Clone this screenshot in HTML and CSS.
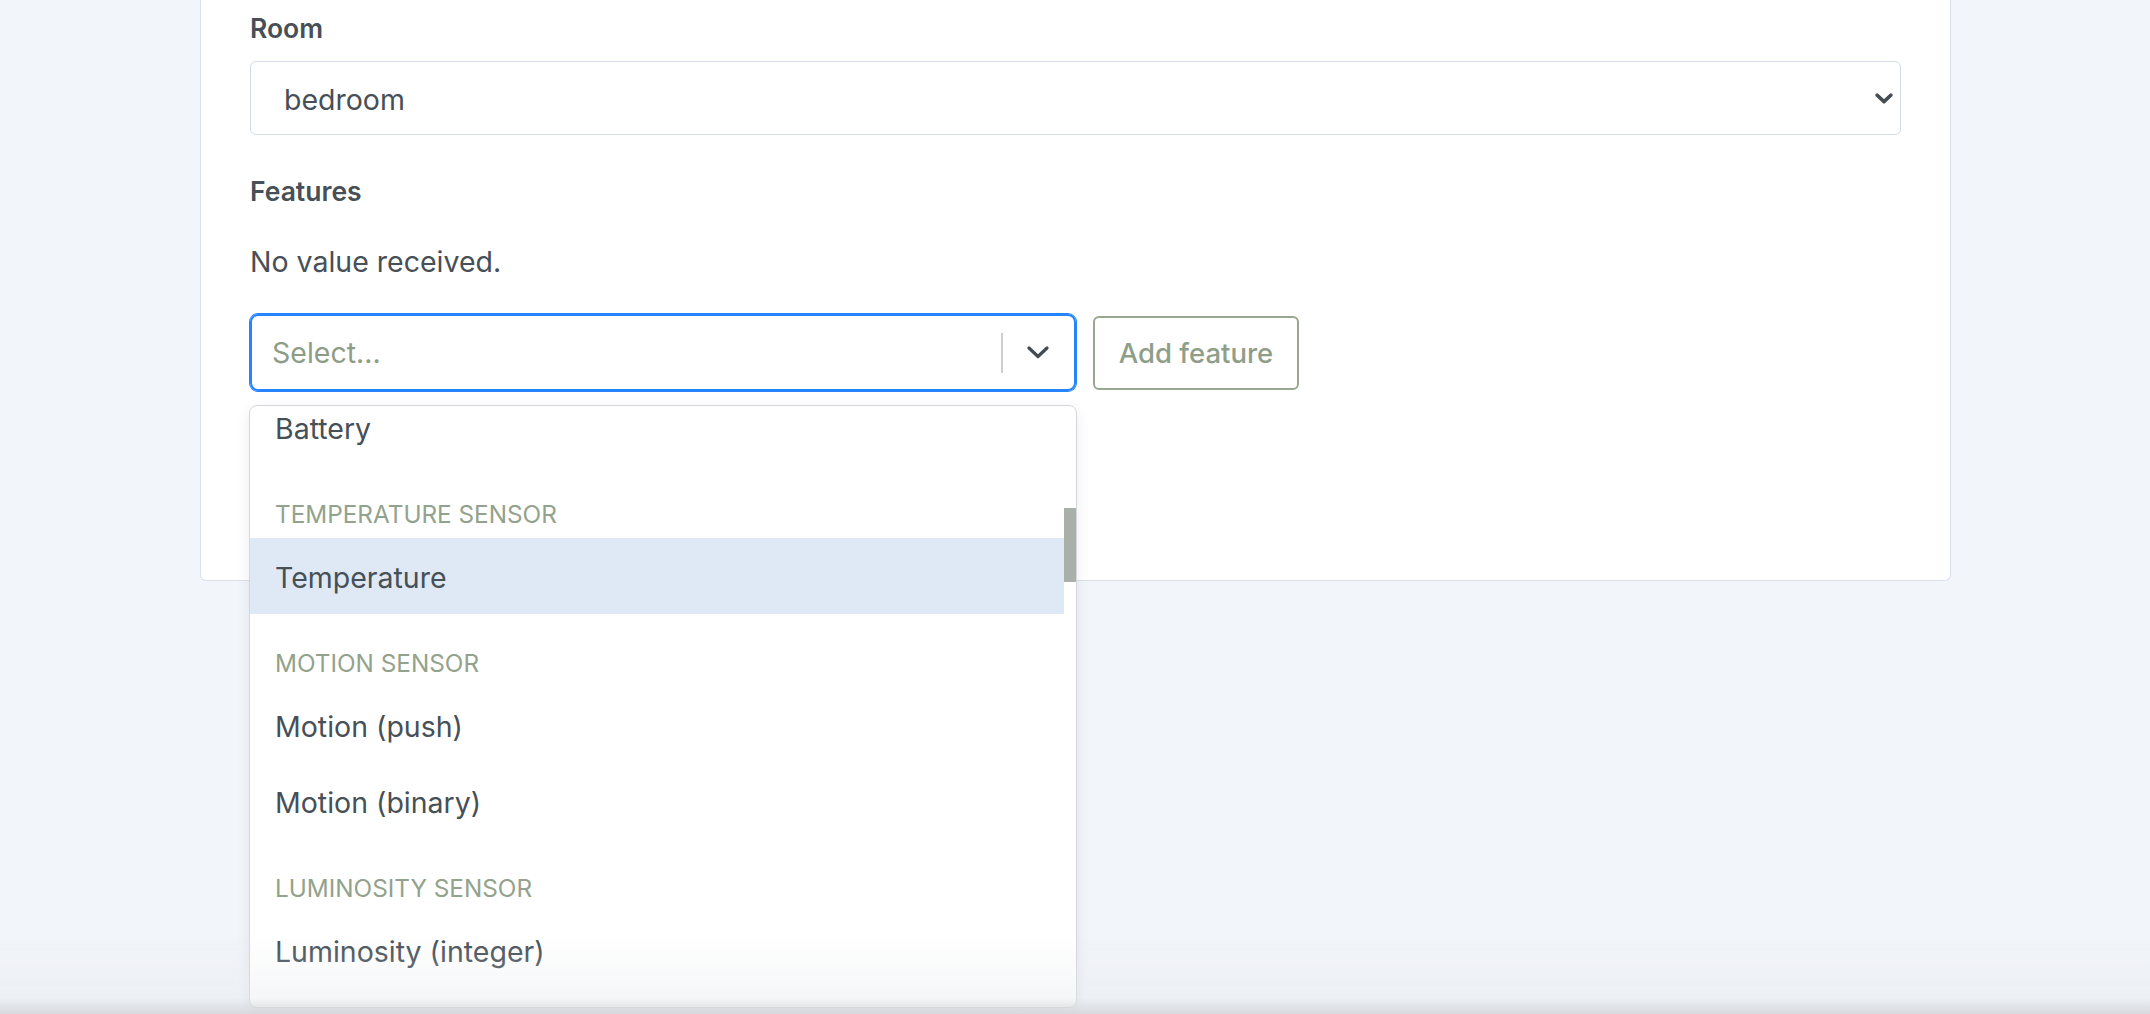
FILE: index.html
```html
<!DOCTYPE html>
<html lang="en">
<head>
    <meta charset="UTF-8">
    <meta name="viewport" content="width=device-width, initial-scale=1.0">
    <title>Edit device</title>
    <link rel="stylesheet" href="styles.css">
</head>
<body>
    <div class="page">
        <div class="card">
            <div class="field">
                <label class="field-label">Room</label>
                <div class="room-select">
                    <span>bedroom</span>
                    <svg class="select-arrow" width="18" height="11" viewBox="0 0 18 11">
                        <path d="M2.2 2.2L9 8.6L15.8 2.2" fill="none" stroke="#454c52" stroke-width="3.6" stroke-linecap="round" stroke-linejoin="round"/>
                    </svg>
                </div>
            </div>

            <div class="field">
                <label class="field-label">Features</label>
                <p class="empty-text">No value received.</p>

                <div class="feature-row">
                    <div class="feature-select">
                        <div class="control">
                            <span class="placeholder">Select...</span>
                            <span class="separator"></span>
                            <svg class="chevron" width="22" height="13" viewBox="0 0 22 13">
                                <path d="M2 2L11 10.5L20 2" fill="none" stroke="#444c52" stroke-width="3.2" stroke-linecap="round" stroke-linejoin="round"/>
                            </svg>
                        </div>

                        <div class="menu">
                            <div class="menu-list">
                                <div class="menu-scroll">
                                    <div class="option-group is-cut">
                                        <div class="option">Battery</div>
                                    </div>
                                    <div class="option-group">
                                        <div class="group-heading">Temperature sensor</div>
                                        <div class="option is-focused">Temperature</div>
                                    </div>
                                    <div class="option-group">
                                        <div class="group-heading">Motion sensor</div>
                                        <div class="option">Motion (push)</div>
                                        <div class="option">Motion (binary)</div>
                                    </div>
                                    <div class="option-group">
                                        <div class="group-heading">Luminosity sensor</div>
                                        <div class="option">Luminosity (integer)</div>
                                    </div>
                                </div>
                            </div>
                            <div class="scroll-track">
                                <div class="scroll-thumb"></div>
                            </div>
                        </div>
                    </div>
                    <button class="add-button">Add feature</button>
                </div>
            </div>
        </div>
    </div>

    <div class="bottom-fade"></div>
</body>
</html>
```

FILE: styles.css
```css
body {
    margin: 0;
    padding: 0;
    font-family: Inter, "Noto Sans", sans-serif;
    background: #f2f5fa;
    color: #474f57;
}

.page {
    padding-left: 200px;
    min-height: 1014px;
}

.card {
    width: 1751px;
    box-sizing: border-box;
    background: #fff;
    border: 1px solid #d9e1ec;
    border-top: none;
    border-radius: 0 0 6px 6px;
    padding: 13px 49px 189px;
}

.field + .field {
    margin-top: 41px;
}

.field-label {
    display: block;
    font-size: 26.5px;
    line-height: 31px;
    font-weight: 600;
    margin-bottom: 17px;
}

.room-select {
    height: 74px;
    box-sizing: border-box;
    display: flex;
    align-items: center;
    justify-content: space-between;
    padding: 3px 7px 0 33px;
    border: 1px solid #d4dce7;
    border-radius: 6px;
    font-size: 28.5px;
    line-height: 34px;
}

.select-arrow {
    margin-top: -3px;
}

.empty-text {
    margin: 38px 0 35px;
    font-size: 28.5px;
    line-height: 34px;
}

.feature-row {
    display: flex;
    align-items: center;
    gap: 17px;
}

.feature-select {
    position: relative;
    width: 826px;
}

.control {
    height: 77px;
    box-sizing: border-box;
    display: flex;
    align-items: center;
    border: 2px solid #2684ff;
    box-shadow: 0 0 0 1px #2684ff;
    border-radius: 8px;
    padding-left: 20px;
}

.placeholder {
    flex: 1;
    font-size: 28.5px;
    line-height: 34px;
    color: #8d9c87;
}

.separator {
    width: 2px;
    height: 40px;
    background: #cfcfcf;
}

.chevron {
    margin: 0 25px 0 24px;
}

.add-button {
    width: 206px;
    height: 74px;
    box-sizing: border-box;
    background: #fff;
    border: 2px solid #98a78f;
    border-radius: 6px;
    font-family: Inter, "Noto Sans", sans-serif;
    font-size: 27.5px;
    font-weight: 500;
    color: #8e9e88;
    padding: 0;
}

/* dropdown menu */
.menu {
    position: absolute;
    top: 91px;
    left: -1px;
    width: 828px;
    height: 603px;
    box-sizing: border-box;
    display: flex;
    background: #fff;
    border: 1px solid #d4d7db;
    border-radius: 8px;
    box-shadow: 0 4px 14px rgba(0, 0, 0, 0.08);
    overflow: hidden;
    z-index: 2;
}

.menu-list {
    flex: 1;
    overflow: hidden;
}

.menu-scroll {
    margin-top: -17px;
}

.option-group {
    padding: 17px 0 18px;
}

.option-group.is-cut {
    padding-top: 0;
}

.group-heading {
    font-size: 24.3px;
    line-height: 28px;
    text-transform: uppercase;
    color: #93a28c;
    padding: 0 25px;
    margin-bottom: 10px;
}

.option {
    font-size: 28.5px;
    line-height: 43px;
    padding: 18px 25px 15px;
}

.option.is-focused {
    background: #dfe9f5;
}

.scroll-track {
    width: 12px;
}

.scroll-thumb {
    margin-top: 102px;
    height: 74px;
    background: #a9b0aa;
}

.bottom-fade {
    position: fixed;
    left: 0;
    right: 0;
    bottom: 0;
    height: 80px;
    background: linear-gradient(to bottom, rgba(228, 231, 236, 0), rgba(228, 231, 236, 0.35) 80%, rgba(208, 210, 214, 0.8));
    pointer-events: none;
    z-index: 5;
}
```
